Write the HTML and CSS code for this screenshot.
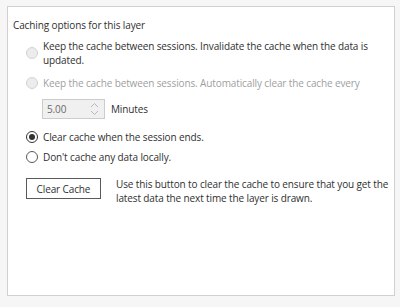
FILE: index.html
```html
<!DOCTYPE html>
<html>
<head>
<meta charset="utf-8">
<link rel="stylesheet" href="styles.css">
</head>
<body>
<div class="panel">
  <div class="title">Caching options for this layer</div>
  <div class="options">
    <div class="opt opt1">
      <span class="radio disabled"></span>
      <span class="label">Keep the cache between sessions. Invalidate the cache when the data is<br>updated.</span>
    </div>
    <div class="opt opt2">
      <span class="radio disabled"></span>
      <span class="label muted">Keep the cache between sessions. Automatically clear the cache every</span>
    </div>
    <div class="spin-row">
      <div class="spin">
        <span class="spin-val">5.00</span>
        <span class="spin-arrows">
          <svg width="9" height="14" viewBox="0 0 9 14"><path d="M1 5 L4.5 1.5 L8 5" fill="none" stroke="#b8b8b8" stroke-width="1"/><path d="M1 9 L4.5 12.5 L8 9" fill="none" stroke="#b8b8b8" stroke-width="1"/></svg>
        </span>
      </div>
      <span class="label">Minutes</span>
    </div>
    <div class="opt opt3">
      <span class="radio checked"></span>
      <span class="label">Clear cache when the session ends.</span>
    </div>
    <div class="opt opt4">
      <span class="radio"></span>
      <span class="label">Don't cache any data locally.</span>
    </div>
    <div class="btn-row">
      <div class="btn">Clear Cache</div>
      <div class="desc">Use this button to clear the cache to ensure that you get the<br>latest data the next time the layer is drawn.</div>
    </div>
  </div>
</div>
</body>
</html>
```

FILE: styles.css
```css
html, body {
  margin: 0;
  padding: 0;
}
body {
  background: #f5f6f5;
  width: 400px;
  height: 307px;
  overflow: hidden;
  font-family: "Open Sans", "Noto Sans", sans-serif;
  font-size: 10px;
  letter-spacing: -0.12px;
  color: #2f2f2f;
}
.panel {
  box-sizing: border-box;
  margin: 6px 0 0 7px;
  width: 388px;
  height: 290px;
  border: 1px solid #cfd1d0;
  background: #ffffff;
  padding: 11px 5px 0 5px;
}
.title {
  line-height: 14px;
  height: 14px;
}
.options {
  padding-left: 13px;
}
.opt {
  display: flex;
  align-items: center;
  gap: 5px;
  line-height: 14px;
}
.opt1 { margin-top: 7px; }
.opt2 { margin-top: 9px; }
.opt3 { margin-top: 11px; }
.opt4 { margin-top: 6px; }
.label {
  line-height: 14px;
  white-space: nowrap;
}
.muted {
  color: #a0a0a0;
}
.radio {
  box-sizing: border-box;
  width: 12px;
  height: 12px;
  border-radius: 50%;
  border: 1px solid #5a5a5a;
  background: #ffffff;
  flex: none;
  display: flex;
  align-items: center;
  justify-content: center;
}
.radio.disabled {
  border-color: #d4d4d4;
  background: #ececec;
}
.radio.checked {
  border-color: #333333;
}
.radio.checked::after {
  content: "";
  width: 6px;
  height: 6px;
  border-radius: 50%;
  background: #333333;
}
.spin-row {
  display: flex;
  align-items: center;
  gap: 6px;
  margin-top: 9px;
  margin-left: 16px;
}
.spin {
  box-sizing: border-box;
  width: 63px;
  height: 20px;
  border: 1px solid #cccccc;
  background: #f0f0f0;
  display: flex;
  align-items: center;
  justify-content: space-between;
  padding: 0 5px 0 4px;
}
.spin-val {
  color: #6a6a6a;
}
.spin-arrows {
  display: flex;
}
.btn-row {
  display: flex;
  align-items: flex-start;
  gap: 15px;
  margin-top: 13px;
}
.btn {
  box-sizing: border-box;
  width: 75px;
  height: 21px;
  margin-top: 1px;
  border: 1px solid #5a5a5a;
  background: #ffffff;
  display: flex;
  align-items: center;
  justify-content: center;
  flex: none;
}
.desc {
  line-height: 14px;
  white-space: nowrap;
}
```
